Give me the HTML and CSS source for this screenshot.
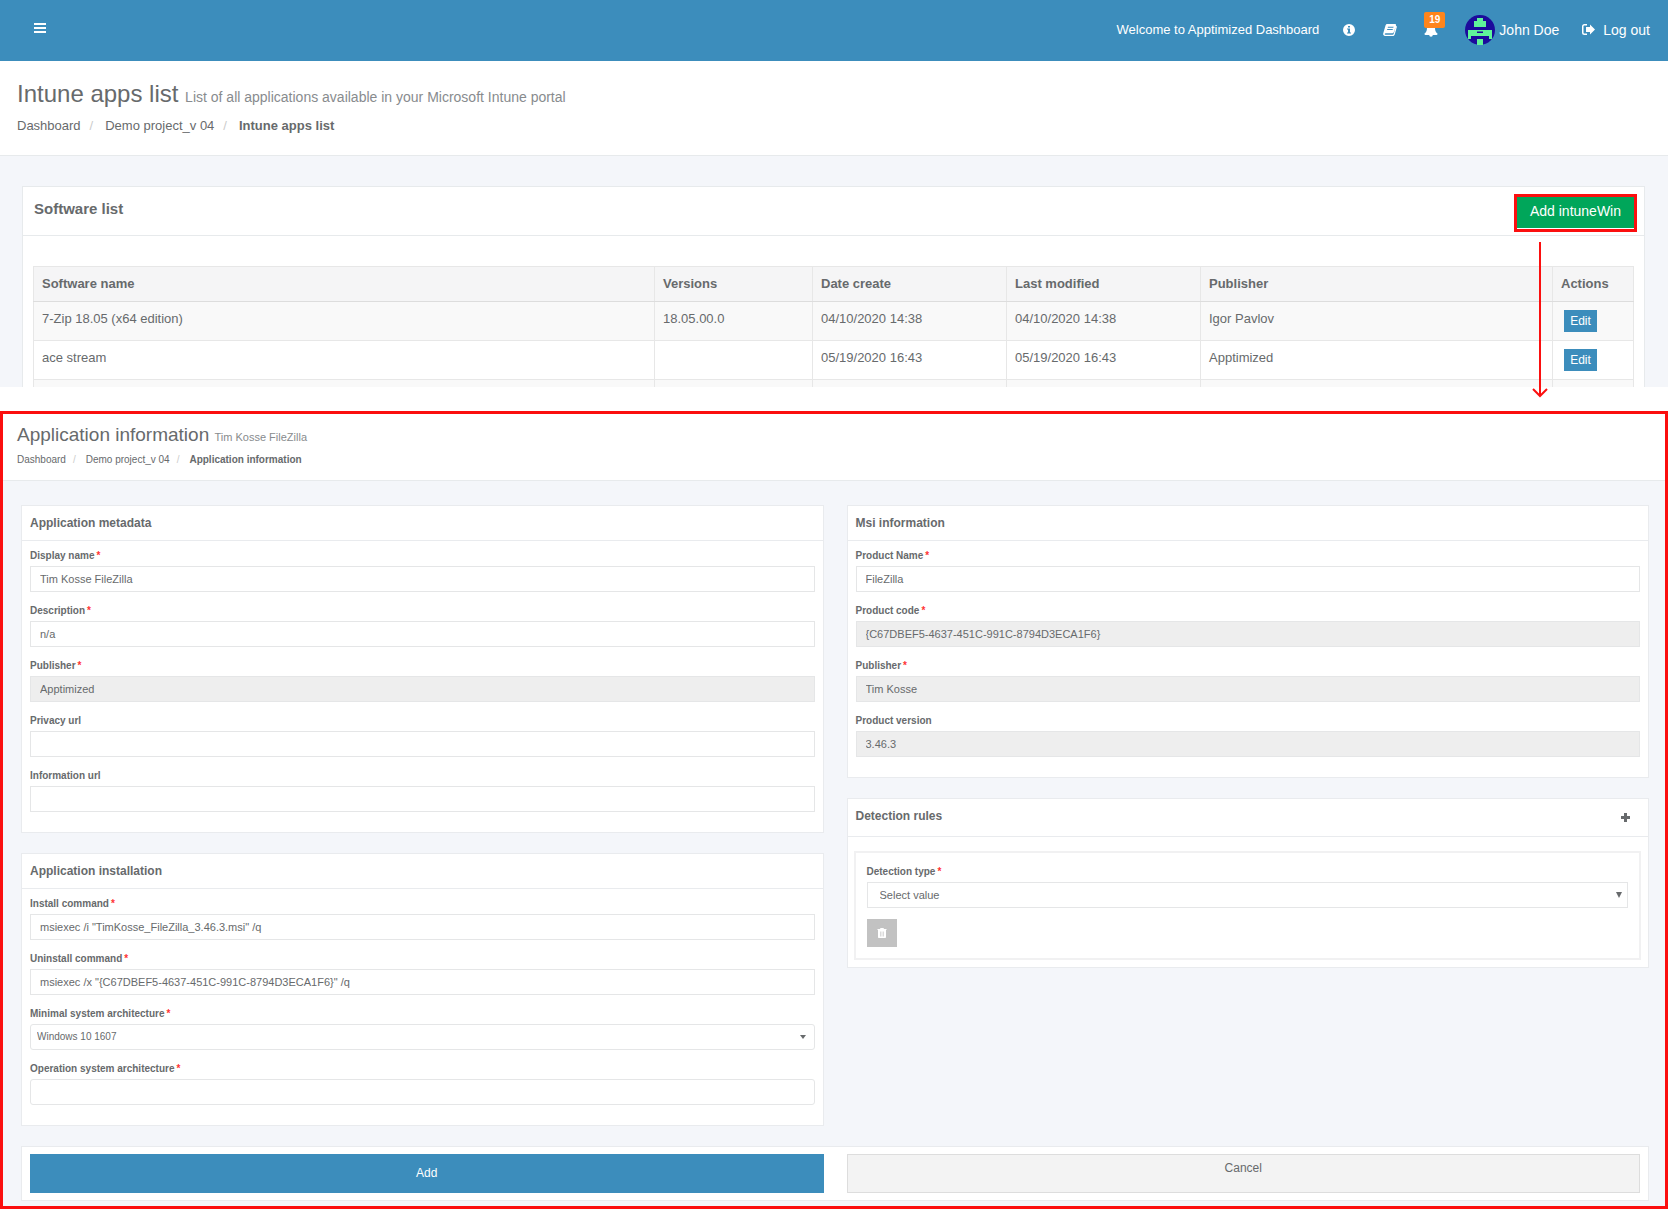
FILE: index.html
```html
<!DOCTYPE html>
<html lang="en">
<head>
<meta charset="utf-8">
<meta name="viewport" content="width=device-width, initial-scale=1">
<title>Intune apps list</title>
<link rel="stylesheet" href="styles.css">
</head>
<body>
<header class="topbar">
  <button class="menu-toggle" type="button" aria-label="Toggle menu">
    <svg width="12" height="10" viewBox="0 0 12 10"><path d="M0 0h12v2H0zM0 4h12v2H0zM0 8h12v2H0z"/></svg>
  </button>
  <nav class="topnav">
    <span class="welcome">Welcome to Apptimized Dashboard</span>
    <a class="icon-link" href="#" aria-label="Information">
      <svg width="12" height="12" viewBox="0 0 12 12"><path fill-rule="evenodd" d="M6 0a6 6 0 1 1 0 12A6 6 0 0 1 6 0zM5 2v1.600h2V2zM4 4.500v1h1v3H4v1h4v-1H7v-4z"/></svg>
    </a>
    <a class="icon-link book" href="#" aria-label="Documentation">
      <svg width="14" height="12" viewBox="0 0 14 12"><path fill-rule="evenodd" d="M4.200 0h7.600c1 0 1.400.6 1.100 1.500l.7.700c.3.300.3.600.2 1l-2 7c-.3 1.100-1 1.800-2 1.800H2C.7 12-.2 10.700.2 9.500L2.500 1.600C2.800.6 3.300 0 4.200 0zM5 2.800l-.3.900h5.600l.3-.9zM4.300 5l-.3.900h5.600l.3-.9zM1.700 9.900c-.1.500.2.800.8.800h7c.6 0 .9-.3 1.100-.8l2-6.600-2 5.200c-.2.600-.6.800-1.200.8H2.700c-.5 0-.9.200-1 .6z"/></svg>
    </a>
    <a class="icon-link bell" href="#" aria-label="Notifications">
      <svg width="14" height="14" viewBox="0 0 14 14"><path d="M7 0c.6 0 1 .4 1 1 2 .5 3 2.100 3 4 0 3 1 4.500 2.600 5.800 0 .7-.4 1.200-1 1.200H8.800a1.800 1.800 0 0 1-3.600 0H1.400c-.6 0-1-.5-1-1.200C2 9.500 3 8 3 5c0-1.900 1-3.500 3-4 0-.6.400-1 1-1z"/></svg>
      <span class="badge">19</span>
    </a>
    <a class="user" href="#">
      <svg class="avatar" width="30" height="30" viewBox="0 0 30 30"><circle cx="15" cy="15" r="15" fill="#1c0b9c"/><path fill="#5ff59a" d="M12 3h6v3h3v6H9V6h3zM12 15h6v1.500h-6zM3 15h9v3h6v-3h9v9h-3v-3H6v3H3zM12 24h6v6h-6z"/></svg>
      <span>John Doe</span>
    </a>
    <a class="logout" href="#">
      <svg width="13" height="11" viewBox="0 0 13 11"><path d="M5 0v1.500H2.500c-.6 0-1 .4-1 1v6c0 .6.400 1 1 1H5V11H2.500A2.500 2.500 0 0 1 0 8.500v-6A2.500 2.500 0 0 1 2.500 0zM8 .5l5 5-5 5V8H4V3h4z"/></svg>
      <span>Log out</span>
    </a>
  </nav>
</header>

<main>
  <section class="apps">
    <div class="page-head">
      <h1>Intune apps list <small>List of all applications available in your Microsoft Intune portal</small></h1>
      <ol class="crumbs">
        <li><a href="#">Dashboard</a></li>
        <li><a href="#">Demo project_v 04</a></li>
        <li><strong>Intune apps list</strong></li>
      </ol>
    </div>
    <div class="apps-body">
      <div class="software">
        <div class="software-head">
          <h2>Software list</h2>
          <div class="marked"><button class="btn-add-win" type="button">Add intuneWin</button></div>
          <svg class="arrow" width="16" height="156" viewBox="0 0 16 156"><path d="M8 0v154M1 147l7 7 7-7" fill="none" stroke="#fb0f0f" stroke-width="2"/></svg>
        </div>
        <table class="apps-table">
          <colgroup><col><col class="c-ver"><col class="c-date"><col class="c-date"><col class="c-pub"><col class="c-act"></colgroup>
          <thead>
            <tr><th>Software name</th><th>Versions</th><th>Date create</th><th>Last modified</th><th>Publisher</th><th>Actions</th></tr>
          </thead>
          <tbody>
            <tr><td>7-Zip 18.05 (x64 edition)</td><td>18.05.00.0</td><td>04/10/2020 14:38</td><td>04/10/2020 14:38</td><td>Igor Pavlov</td><td class="act"><button class="btn-edit" type="button">Edit</button></td></tr>
            <tr><td>ace stream</td><td></td><td>05/19/2020 16:43</td><td>05/19/2020 16:43</td><td>Apptimized</td><td class="act"><button class="btn-edit" type="button">Edit</button></td></tr>
            <tr class="cut"><td></td><td></td><td></td><td></td><td></td><td></td></tr>
          </tbody>
        </table>
      </div>
    </div>
  </section>

  <section class="info">
    <div class="page-head page-head-small">
      <h1>Application information <small>Tim Kosse FileZilla</small></h1>
      <ol class="crumbs">
        <li><a href="#">Dashboard</a></li>
        <li><a href="#">Demo project_v 04</a></li>
        <li><strong>Application information</strong></li>
      </ol>
    </div>
    <form class="info-form">
      <div class="columns">
        <div class="column">
          <div class="panel">
            <h2>Application metadata</h2>
            <div class="fields">
              <div class="field"><label for="display-name">Display name<b>*</b></label><input id="display-name" type="text" value="Tim Kosse FileZilla"></div>
              <div class="field"><label for="description">Description<b>*</b></label><input id="description" type="text" value="n/a"></div>
              <div class="field"><label for="publisher">Publisher<b>*</b></label><input id="publisher" type="text" value="Apptimized" readonly></div>
              <div class="field"><label for="privacy">Privacy url</label><input id="privacy" type="text"></div>
              <div class="field"><label for="information">Information url</label><input id="information" type="text"></div>
            </div>
          </div>
          <div class="panel">
            <h2>Application installation</h2>
            <div class="fields">
              <div class="field"><label for="install">Install command<b>*</b></label><input id="install" type="text" value="msiexec /i &quot;TimKosse_FileZilla_3.46.3.msi&quot; /q"></div>
              <div class="field"><label for="uninstall">Uninstall command<b>*</b></label><input id="uninstall" type="text" value="msiexec /x &quot;{C67DBEF5-4637-451C-991C-8794D3ECA1F6}&quot; /q"></div>
              <div class="field"><label for="min-system">Minimal system architecture<b>*</b></label>
                <div class="select rounded"><select id="min-system"><option>Windows 10 1607</option></select><svg width="6" height="4" viewBox="0 0 6 4"><path d="M0 0h6L3 4z"/></svg></div></div>
              <div class="field"><label for="op-system">Operation system architecture<b>*</b></label><input class="rounded" id="op-system" type="text"></div>
            </div>
          </div>
        </div>
        <div class="column">
          <div class="panel">
            <h2>Msi information</h2>
            <div class="fields">
              <div class="field"><label for="product-name">Product Name<b>*</b></label><input id="product-name" type="text" value="FileZilla"></div>
              <div class="field"><label for="product-code">Product code<b>*</b></label><input id="product-code" type="text" value="{C67DBEF5-4637-451C-991C-8794D3ECA1F6}" readonly></div>
              <div class="field"><label for="msi-publisher">Publisher<b>*</b></label><input id="msi-publisher" type="text" value="Tim Kosse" readonly></div>
              <div class="field"><label for="product-version">Product version</label><input id="product-version" type="text" value="3.46.3" readonly></div>
            </div>
          </div>
          <div class="panel">
            <div class="rules-head">
              <h2>Detection rules</h2>
              <button class="btn-plus" type="button" aria-label="Add rule"><svg width="9" height="9" viewBox="0 0 9 9"><path d="M3 0h3v3h3v3H6v3H3V6H0V3h3z"/></svg></button>
            </div>
            <div class="rule">
              <div class="field"><label for="detection">Detection type<b>*</b></label>
                <div class="select wide"><select id="detection"><option>Select value</option></select><svg width="6" height="6" viewBox="0 0 6 6"><path d="M0 0h6L3 6z"/></svg></div></div>
              <button class="btn-trash" type="button" aria-label="Delete rule"><svg width="10" height="10" viewBox="0 0 10 10"><path fill-rule="evenodd" d="M3.500 0h3l.5 1h2.500v1H9v7c0 .6-.4 1-1 1H2c-.6 0-1-.4-1-1V2H.5V1H3zM3 3.500v5h.6v-5zM4.700 3.500v5h.6v-5zM6.400 3.500v5H7v-5z"/></svg></button>
            </div>
          </div>
        </div>
      </div>
      <div class="form-actions">
        <button class="btn-submit" type="submit">Add</button>
        <button class="btn-cancel" type="button">Cancel</button>
      </div>
    </form>
  </section>
</main>
</body>
</html>
```
FILE: styles.css
```css
* { box-sizing: border-box; }
body, h1, h2, ol { margin: 0; padding: 0; }
body {
  background: #fff;
  color: #676a6c;
  font: 13px/20px "Liberation Sans", Arial, sans-serif;
}
a { color: inherit; text-decoration: none; }
button, input, select { font: inherit; color: inherit; margin: 0; }
button { border: 0; padding: 0; cursor: pointer; }
svg { display: block; fill: currentColor; flex: none; }

.topbar {
  display: flex;
  justify-content: space-between;
  align-items: center;
  height: 61px;
  padding: 0 18px 0 34px;
  background: #3c8dbc;
  color: #fff;
}
.menu-toggle { background: none; color: #fff; padding-bottom: 6px; }
.topnav { display: flex; align-items: center; padding-bottom: 2px; }
.welcome { margin-right: 24px; }
.icon-link { position: relative; margin-right: 28px; }
.book, .bell { margin-right: 27px; }
.badge {
  position: absolute;
  left: 0;
  top: -11px;
  width: 21px;
  border-radius: 2px;
  background: #ff851b;
  font-size: 10px;
  font-weight: bold;
  line-height: 16px;
  text-align: center;
}
.user, .logout { display: flex; align-items: center; font-size: 14px; }
.user { gap: 4px; margin-right: 23px; }
.logout { gap: 8px; }

.page-head { padding: 20px 17px 19px; border-bottom: 1px solid #e7eaec; }
.page-head h1 { font-size: 24px; line-height: 26px; font-weight: 400; }
.page-head small { font-size: 14px; color: #888b8e; }
.crumbs { display: flex; list-style: none; margin-top: 6px; }
.crumbs li + li::before { content: "/"; padding: 0 12px 0 9px; color: #ccc; }

.apps-body { background: #f4f6fa; padding: 30px 23px 0 22px; }
.software { background: #fff; border: 1px solid #e7eaec; border-bottom: 0; padding: 0 10px; }
.software-head {
  position: relative;
  display: flex;
  justify-content: space-between;
  align-items: flex-start;
  height: 49px;
  margin: 0 -10px 30px;
  padding: 7px 7px 0 11px;
  border-bottom: 1px solid #e7eaec;
}
.software-head h2 { font-size: 15px; line-height: 30px; }
.marked { border: 3px solid #fb0f0f; padding-bottom: 1px; }
.btn-add-win {
  display: block;
  height: 31px;
  padding: 0 13px 4px;
  background: #00a65a;
  color: #fff;
  font-size: 14px;
}
.arrow { position: absolute; right: 96px; top: 55px; }

.apps-table { width: 100%; table-layout: fixed; border-collapse: collapse; }
.apps-table th, .apps-table td { border: 1px solid #e7e7e7; padding: 7px 8px; text-align: left; vertical-align: top; }
.apps-table th { background: #f5f5f6; border-bottom-color: #ddd; }
.apps-table tbody tr { height: 39px; }
.apps-table tbody tr:nth-child(odd) { background: #f9f9f9; }
.apps-table .act { padding: 8px 11px; }
.apps-table .cut { height: 7px; }
.apps-table .cut td { padding: 3px 0; border-bottom: 0; }
.c-ver { width: 158px; }
.c-date { width: 194px; }
.c-pub { width: 352px; }
.c-act { width: 81px; }
.btn-edit {
  display: block;
  width: 33px;
  height: 22px;
  background: #3c8dbc;
  color: #fff;
  font-size: 12px;
}

.info { margin-top: 24px; border: 3px solid #fb0f0f; font-size: 10px; background: #f4f6fa; }
.page-head-small { padding: 9px 14px 10px; background: #fff; }
.page-head-small h1 { font-size: 19px; line-height: 24px; }
.page-head-small small { font-size: 11px; }
.page-head-small .crumbs { margin-top: 1px; }
.page-head-small .crumbs li + li::before { padding: 0 10px 0 7px; }

.info-form { padding: 24px 16px 5px 18px; }
.columns { display: grid; grid-template-columns: 1fr 1fr; gap: 23px; align-items: start; }
.column { display: grid; gap: 20px; }
.panel { background: #fff; border: 1px solid #e9ebee; }
.panel h2 { font-size: 12px; line-height: 34px; padding: 0 8px; border-bottom: 1px solid #e9ebee; }
.fields { display: grid; gap: 13px; padding: 9px 8px 20px; }
.field { display: grid; }
.field label { line-height: 12px; font-weight: bold; margin-bottom: 4px; }
.field b { color: #f33; margin-left: 2px; }
.field input, .field select {
  width: 100%;
  height: 26px;
  padding: 0 9px;
  border: 1px solid #e5e6e7;
  border-radius: 0;
  background: #fff;
  font-size: 11px;
}
.field input:read-only { background: #eee; }
.select { display: grid; grid-template-columns: 1fr 15px; align-items: center; }
.select.wide { grid-template-columns: 1fr 12px; }
.select select { grid-area: 1 / 1 / 2 / 3; appearance: none; }
.select svg { grid-area: 1 / 2; pointer-events: none; position: relative; }
.field .rounded select { font-size: 10px; padding: 0 6px; border-radius: 3px; }
.field input.rounded { border-radius: 3px; }
.field .wide select { padding: 0 12px; }

.rules-head { display: flex; justify-content: space-between; height: 38px; padding-right: 18px; border-bottom: 1px solid #e9ebee; }
.rules-head h2 { border: 0; }
.btn-plus { background: none; }
.rule { margin: 14px 7px 7px 6px; padding: 13px 11px 11px; border: 2px solid #f1f1f2; }
.btn-trash { display: grid; place-items: center; width: 30px; height: 28px; margin-top: 11px; background: #c2c2c2; color: #fff; }

.form-actions {
  display: grid;
  grid-template-columns: 1fr 1fr;
  gap: 23px;
  margin-top: 20px;
  padding: 7px 8px;
  border: 1px solid #e9ebee;
  background: #fff;
}
.form-actions button { height: 39px; font-size: 12px; }
.btn-submit { background: #3c8dbc; color: #fff; }
.form-actions .btn-cancel { background: #f3f3f3; border: 1px solid #ddd; padding-bottom: 11px; }
```
